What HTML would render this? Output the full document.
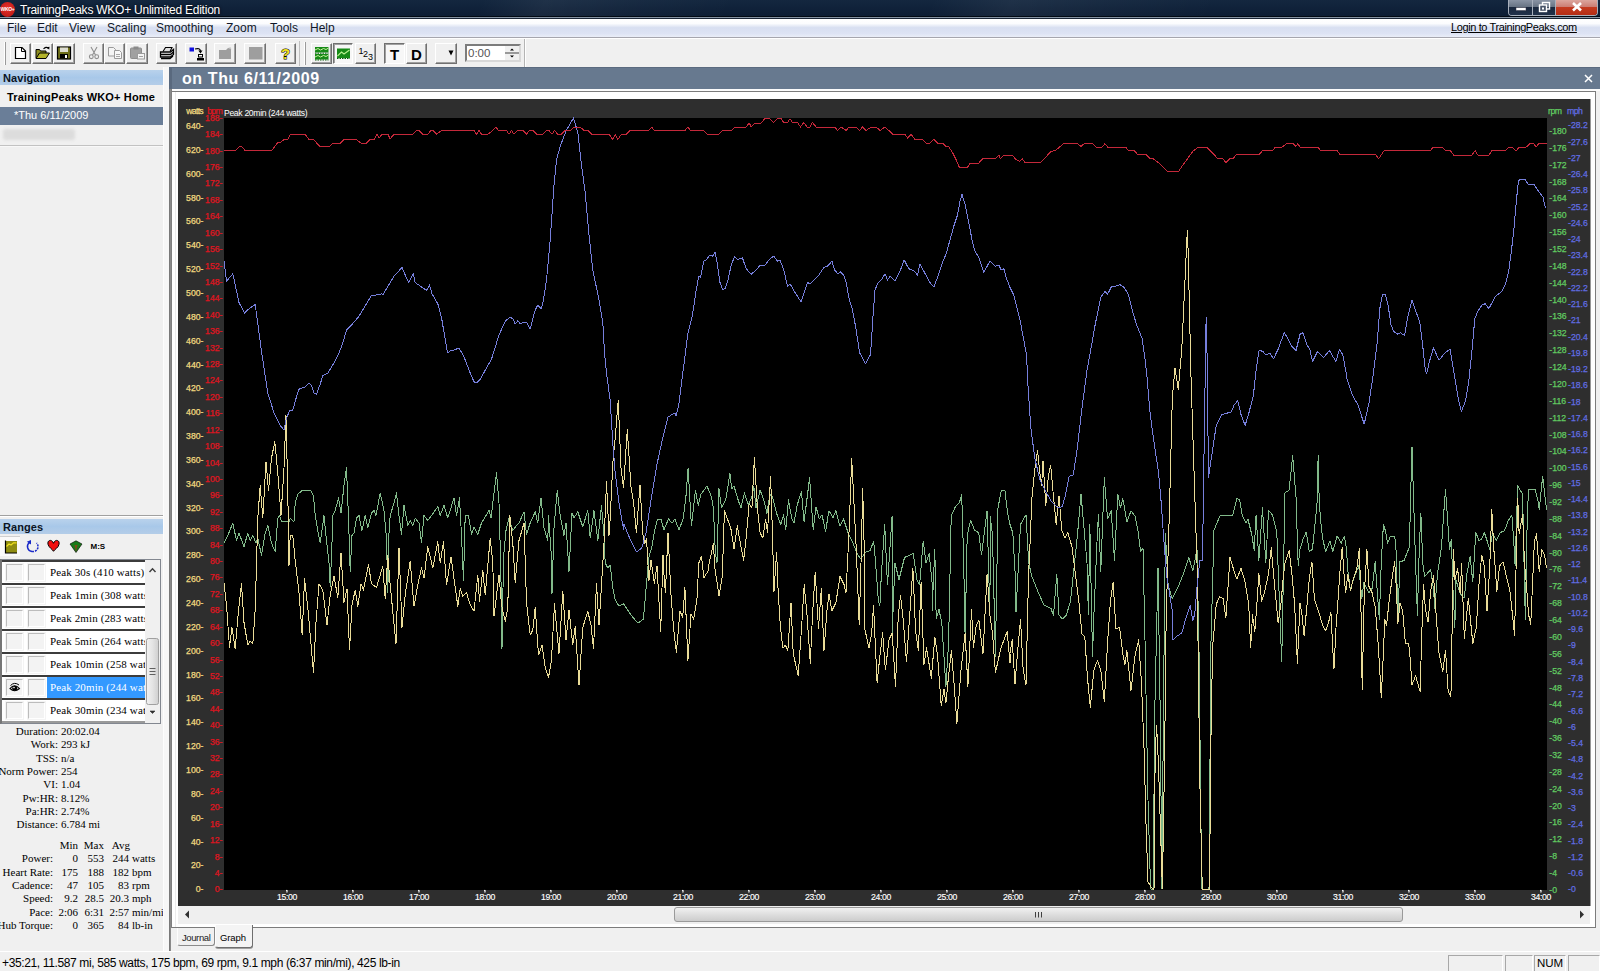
<!DOCTYPE html>
<html lang="en"><head><meta charset="utf-8"><title>TrainingPeaks WKO+ Unlimited Edition</title>
<style>
*{box-sizing:border-box;margin:0;padding:0}
html,body{width:1600px;height:971px;overflow:hidden;background:#f0f0f0;font-family:"Liberation Sans",Arial,sans-serif;font-size:12px;color:#000}
.abs{position:absolute}
#titlebar{position:absolute;left:0;top:0;width:1600px;height:19px;background:linear-gradient(#14273f 0,#10223a 8px,#0d1e34 16px,#020a14 16px,#020a14 17px,#8795a5 17px,#8795a5 18px,#1a2636 18px)}
#titlebar:after{content:"";position:absolute;left:0;top:0;width:1600px;height:16px;background:linear-gradient(115deg,rgba(255,255,255,0) 30%,rgba(255,255,255,.05) 34%,rgba(255,255,255,.02) 40%,rgba(255,255,255,0) 46%,rgba(255,255,255,0) 58%,rgba(255,255,255,.05) 63%,rgba(255,255,255,.02) 70%,rgba(255,255,255,0) 76%)}
#titlebar .ttl{position:absolute;left:20px;top:2.5px;color:#fff;font-size:12px;line-height:15px;white-space:nowrap;letter-spacing:-0.24px;text-shadow:0 0 3px #000}
#appicon{position:absolute;left:0;top:2px;width:15px;height:15px;border-radius:50%;background:radial-gradient(circle at 50% 40%,#e8302c,#b01410);color:#fff;font-size:5px;font-weight:bold;text-align:center;line-height:15px;letter-spacing:-0.3px}
#winbtns{position:absolute;left:1508px;top:0;width:90px;height:16px;border:1px solid #a8b0bc;border-top:none;border-radius:0 0 4px 4px;overflow:hidden}
#winbtns div{position:absolute;top:0;height:15px}
#menubar{position:absolute;left:0;top:19px;width:1600px;height:19px;background:linear-gradient(#ffffff 0,#fbfcfe 25%,#d8dff1 48%,#dde3f4 80%,#eaeef8 100%);border-bottom:1px solid #a6a6ae}
#menubar span{position:absolute;top:2px;font-size:12px;line-height:14px;color:#101828;white-space:nowrap}
#toolbar{position:absolute;left:0;top:38px;width:1600px;height:29px;background:#f0f0f0;border-top:1px solid #fff}
.tb{position:absolute;top:4px;height:21px;width:21px;background:#f0f0f0;border:1px solid;border-color:#fff #707070 #707070 #fff;box-shadow:inset -1px -1px 0 #a0a0a0}
.tb.down{border-color:#707070 #fff #fff #707070;box-shadow:inset 1px 1px 0 #a0a0a0;background:#f7f7f7}
.tb svg{position:absolute;left:0;top:0}
#mainhdr{position:absolute;left:169px;top:67px;width:1431px;height:22px;background:#67798f;border-left:3px solid #59697e;border-top:1px solid #5b6b80}
#mainhdr .t{position:absolute;left:10px;top:1px;color:#fff;font-weight:bold;font-size:16px;letter-spacing:.6px;line-height:19px;white-space:nowrap}
#left{position:absolute;left:0;top:67px;width:163px;height:887px;background:#f0f0f0}
.phdr{position:absolute;left:0;width:163px;height:15px;background:linear-gradient(#b9d2ec 0,#a8c8e9 50%,#b4cde8 100%);font-weight:bold;font-size:11px;letter-spacing:.08px;line-height:16px;padding-left:3px;color:#0a1424}
.serif{font-family:"Liberation Serif","Times New Roman",serif}
#chartwrap{position:absolute;left:0;top:0;width:1600px;height:971px;pointer-events:none}
#chart{position:absolute;left:0;top:0}
#statusbar{position:absolute;left:0;top:951px;width:1600px;height:20px;background:#f0f0f0;border-top:1px solid #fff}
#statusbar .st{position:absolute;left:2px;top:4px;font-size:12px;letter-spacing:-0.37px;line-height:15px;white-space:nowrap;color:#000}
.navb{font-weight:bold;font-size:11px;letter-spacing:.15px;line-height:15px;white-space:nowrap;top:23px!important;color:#000}
#rlist{position:absolute;left:0;top:492px;width:161px;height:165px;border:1px solid #828790;border-left:2px solid #767676;background:#fff;overflow:hidden}
#rlist .row{position:absolute;left:0;width:143px;height:23px;border-top:2px solid #3c3c3c;background:#fff;overflow:hidden}
#rlist .cb{position:absolute;top:2px;width:17px;height:17px;background:#f3f3f3;border:1px solid;border-color:#bcbcbc #fff #fff #bcbcbc;box-shadow:0 0 0 1px #f4f4f4}
#rlist .rt{position:absolute;left:48px;top:3px;font-size:11px;letter-spacing:.12px;line-height:15px;white-space:nowrap;color:#000}
#rlist .row.sel .rt{left:45px;width:98px;padding-left:3px;top:0;height:21px;line-height:21px;background:#3399ff;color:#fff}
#stats{position:absolute;left:0;top:657px;width:163px;height:110px;font-size:11px;line-height:14px;overflow:hidden}
#stats span,#tbl span{position:absolute;white-space:nowrap}
#stats .l{right:105px}
#stats .v{left:61px}
#tbl{position:absolute;left:0;top:771px;width:163px;height:100px;font-size:11px;line-height:14px;overflow:hidden}
#tbl .l{right:110px}
#tbl .c1{right:85px}
#tbl .c2{right:59px}
#tbl .c3{right:34px}
#tbl .c3h{right:33px}
#tbl .u{left:132px}
#statusbar .pane{position:absolute;top:3px;height:17px;border:1px solid;border-color:#a8a8a8 #fff #fff #a8a8a8;font-size:12px;line-height:15px;color:#000}

</style></head>
<body>
<div id="titlebar">
  <div id="appicon">WKO+</div>
  <div class="ttl">TrainingPeaks WKO+ Unlimited Edition</div>
  <div id="winbtns">
    <div style="left:0;width:24px;background:linear-gradient(#8a94a4 0,#687484 45%,#1a283e 50%,#22324a 100%);border-right:1px solid #a8b0bc"><svg width="24" height="15"><rect x="7" y="7.500" width="10" height="3" fill="#fff" stroke="#334" stroke-width=".5"/></svg></div>
    <div style="left:24px;width:23px;background:linear-gradient(#8a94a4 0,#687484 45%,#1a283e 50%,#22324a 100%);border-right:1px solid #a8b0bc"><svg width="23" height="15"><rect x="9.500" y="2.500" width="7" height="6.500" fill="none" stroke="#fff" stroke-width="1.400"/><rect x="6.500" y="5" width="7" height="6.500" fill="#4a566a" stroke="#fff" stroke-width="1.400"/><rect x="9" y="7.500" width="2" height="2" fill="#fff"/></svg></div>
    <div style="left:47px;width:42px;background:linear-gradient(#dca69e 0,#cc7e74 45%,#c43a20 50%,#b42e16 100%)"><svg width="42" height="15"><path d="M17 3 L25 10.500 M25 3 L17 10.500" stroke="#fff" stroke-width="2.600" fill="none"/></svg></div>
  </div>
</div>
<div id="menubar">
  <span style="left:7px">File</span><span style="left:37px">Edit</span><span style="left:69px">View</span><span style="left:107px">Scaling</span><span style="left:156px">Smoothing</span><span style="left:226px">Zoom</span><span style="left:270px">Tools</span><span style="left:310px">Help</span>
  <span style="left:1451px;top:1px;text-decoration:underline;color:#000;font-size:11px;letter-spacing:-0.38px">Login to TrainingPeaks.com</span>
</div>
<div id="toolbar">
  <div class="abs" style="left:4px;top:3px;width:2px;height:23px;border-left:1px solid #fff;border-right:1px solid #9a9a9a"></div>
  <div class="tb" style="left:10px;width:21px"><svg width="19" height="19" viewBox="0 0 19 19"><path d="M4.5 3.5 h6.500 l3.500 3.500 v7.500 h-10 z" fill="#fff" stroke="#000" stroke-width="1.2"/><path d="M10.500 3.500 v4 h4" fill="none" stroke="#000" stroke-width="1"/></svg></div>
  <div class="tb" style="left:32px;width:21px"><svg width="19" height="19" viewBox="0 0 19 19"><path d="M3 14 V5.5 h3.500 l1 1.500 h5.500 V9" fill="#8c8c20" stroke="#000" stroke-width="1"/><path d="M3 14.500 L6.500 9 H16.500 L13 14.500 Z" fill="#b4b42c" stroke="#000" stroke-width="1"/><path d="M10.500 5 q2.500 -3 5 -.5" fill="none" stroke="#000" stroke-width="1.100"/><path d="M13.800 3.200 l2.700 -.4 l-.3 2.900 z" fill="#000"/></svg></div>
  <div class="tb" style="left:53px;width:22px"><svg width="20" height="19" viewBox="0 0 20 19"><rect x="3.500" y="3" width="13" height="12" fill="#70701a" stroke="#000" stroke-width="1.200"/><rect x="6" y="3.500" width="8" height="4.500" fill="#dcdcd0"/><rect x="6" y="10" width="8" height="4.500" fill="#000"/><rect x="11" y="11" width="2" height="3" fill="#fff"/></svg></div>
  <div class="tb" style="left:83px;width:21px"><svg width="19" height="19" viewBox="0 0 19 19"><path d="M7 3 L11.500 11 M13 3 L8.500 11" stroke="#8e8e8e" stroke-width="1.100" fill="none"/><circle cx="7.300" cy="12.700" r="1.900" fill="none" stroke="#8e8e8e" stroke-width="1.100"/><circle cx="12.700" cy="12.700" r="1.900" fill="none" stroke="#8e8e8e" stroke-width="1.100"/></svg></div>
  <div class="tb" style="left:104px;width:21px"><svg width="19" height="19" viewBox="0 0 19 19"><path d="M3.500 3.500 h5 l2 2 v6.500 h-7 z" fill="#f4f4f4" stroke="#9a9a9a"/><path d="M9.500 6.500 h5 l2 2 v6 h-7 z" fill="#f8f8f8" stroke="#9a9a9a"/><path d="M11 10.500 h4 M11 12.500 h4" stroke="#a8a8a8"/></svg></div>
  <div class="tb" style="left:126px;width:22px"><svg width="20" height="19" viewBox="0 0 20 19"><rect x="3.500" y="4" width="11" height="10.500" rx="1" fill="#a0a0a0" stroke="#8e8e8e"/><rect x="6.500" y="2.500" width="5" height="3" fill="#8a8a8a"/><rect x="10.500" y="9.500" width="7" height="5.500" fill="#f4f4f4" stroke="#9a9a9a"/><path d="M12 12.500 h4" stroke="#a0a0a0"/></svg></div>
  <div class="tb" style="left:156px;width:21px"><svg width="19" height="19" viewBox="0 0 19 19"><path d="M6 7.500 L8.500 3.500 H15 L13 7.500" fill="#e0e0e0" stroke="#000" stroke-width="1.100"/><path d="M3.500 8 H13.500 L16.500 5.500 V10.500 L13.500 13 H3.500 Z" fill="#f0f0f0" stroke="#000" stroke-width="1.300"/><path d="M3.500 10.500 H13.500 L16.500 8" fill="none" stroke="#000" stroke-width="1.300"/><path d="M4 14.500 H13 L16 12" fill="none" stroke="#000" stroke-width="1.300"/></svg></div>
  <div class="tb" style="left:185px;width:22px"><svg width="20" height="19" viewBox="0 0 20 19"><rect x="3.500" y="3.500" width="4.500" height="4" fill="#1010e0"/><path d="M9 5 q5 -1.500 5.500 2" fill="none" stroke="#000" stroke-width="1.200"/><path d="M12.300 6.500 l2.200 3 l2 -3 z" fill="#000"/><rect x="12.500" y="10.500" width="4" height="2.500" fill="#fff" stroke="#000"/><rect x="11" y="14" width="7" height="2.500" fill="#000"/></svg></div>
  <div class="tb" style="left:214px;width:22px"><svg width="20" height="19" viewBox="0 0 20 19"><path d="M4 6 h7 l2 -2 h3 v11 h-12 z" fill="#9e9e9e"/><path d="M13 4 l2.500 -1 l1 2.500" fill="#c8c8c8"/></svg></div>
  <div class="tb" style="left:244px;width:22px"><svg width="20" height="19" viewBox="0 0 20 19"><rect x="4" y="3" width="13.500" height="12.500" fill="#9e9e9e"/></svg></div>
  <div class="tb" style="left:275px;width:21px"><svg width="19" height="19" viewBox="0 0 19 19"><text x="9.500" y="15" text-anchor="middle" font-family="Liberation Sans, Arial, sans-serif" font-weight="bold" font-size="15" fill="#f0e020" stroke="#000" stroke-width="1" paint-order="stroke">?</text></svg></div>
  <div class="abs" style="left:299px;top:2px;width:1px;height:25px;background:#c0c0c0"></div>
  <div class="abs" style="left:304px;top:3px;width:2px;height:23px;border-left:1px solid #fff;border-right:1px solid #9a9a9a"></div>
  <div class="tb" style="left:311px;width:21px"><svg width="19" height="19" viewBox="0 0 19 19"><rect x="3" y="3" width="13.500" height="5.500" fill="#178a17"/><rect x="3" y="10" width="13.500" height="5.500" fill="#178a17"/><path d="M3 6 l3 -1.500 l2.500 1.500 l3 -1.500 l2.500 1 l2.500 -1.500 M3 13 l3 -1.500 l2.500 1.500 l3 -1.500 l2.500 1 l2.500 -1.500" stroke="#c8f0a0" stroke-width="1" fill="none"/><path d="M3 9.200 h13.500 M3 16 h13.500" stroke="#0c5c0c" stroke-dasharray="1.500 1"/></svg></div>
  <div class="tb down" style="left:333px;width:20px"><svg width="18" height="19" viewBox="0 0 18 19"><rect x="3" y="4.500" width="13" height="9.500" fill="#178a17"/><path d="M3.500 12 l4 -4 l2.500 2 l5.500 -4" stroke="#b8f090" stroke-width="1.100" fill="none"/><path d="M3 14.500 h13" stroke="#0c5c0c" stroke-dasharray="1.500 1"/></svg></div>
  <div class="tb" style="left:355px;width:21px"><svg width="19" height="19" viewBox="0 0 19 19"><g font-family="Liberation Sans, Arial, sans-serif" font-size="9" fill="#000"><text x="2.500" y="10">1</text><text x="7" y="13">2</text><text x="12" y="16">3</text></g></svg></div>
  <div class="tb down" style="left:384px;width:21px"><svg width="19" height="19" viewBox="0 0 19 19"><text x="9.500" y="15.500" text-anchor="middle" font-family="Liberation Sans, Arial, sans-serif" font-weight="bold" font-size="15" fill="#000">T</text></svg></div>
  <div class="tb" style="left:406px;width:21px"><svg width="19" height="19" viewBox="0 0 19 19"><text x="9.500" y="15.500" text-anchor="middle" font-family="Liberation Sans, Arial, sans-serif" font-weight="bold" font-size="15" fill="#000">D</text></svg></div>
  <div class="tb" style="left:435px;width:22px"><svg width="20" height="19" viewBox="0 0 20 19"><path d="M12.500 6.500 h5 l-2.500 5 z" fill="#000"/></svg></div>
  <div class="abs" style="left:465px;top:5px;width:56px;height:18px;background:#fff;border:2px solid;border-color:#7c7c7c #d8d8d8 #d8d8d8 #7c7c7c"><span style="position:absolute;left:1px;top:0;font-size:11.500px;line-height:14px;color:#555">0:00</span><svg class="abs" style="left:38px;top:0" width="14" height="14"><rect x="0" y="0" width="14" height="14" fill="#f0f0f0"/><path d="M0 7 h14" stroke="#7c7c7c" stroke-width="1.500"/><path d="M5 4.500 l2 -2 l2 2 z M5 9.500 l2 2 l2 -2 z" fill="#000"/></svg></div>
  <div class="abs" style="left:524px;top:0;width:2px;height:28px;border-left:1px solid #b4b4b4;border-right:1px solid #fff"></div>
</div>
<div id="mainhdr"><div class="t">on Thu 6/11/2009</div>
  <svg class="abs" style="left:1411px;top:5px" width="12" height="12"><path d="M2 2 L9 9 M9 2 L2 9" stroke="#fff" stroke-width="1.5"/></svg>
</div>
<div id="left">
  <div class="phdr" style="top:3px">Navigation</div>
  <div class="abs navb" style="left:7px;top:90px">TrainingPeaks WKO+ Home</div>
  <div class="abs" style="left:0;top:40px;width:163px;height:18px;background:#6a7e98"></div>
  <div class="abs" style="left:14px;top:41px;color:#fff;font-size:11px;line-height:15px;white-space:nowrap">*Thu 6/11/2009</div>
  <div class="abs" style="left:3px;top:62px;width:72px;height:11px;background:#dcdcdc;border-radius:3px;filter:blur(1.5px)"></div>
  <div class="abs" style="left:0;top:78px;width:163px;height:2px;border-top:1px solid #c2c2c2;border-bottom:1px solid #f8f8f8"></div>
  <div class="abs" style="left:0;top:448px;width:163px;height:2px;border-top:1px solid #a0a0a0;border-bottom:1px solid #fff"></div>
  <div class="phdr" style="top:452px">Ranges</div>
  <div class="abs" style="left:0;top:469px;width:20px;height:20px;background:#fafafa;border-top:1px solid #d0d0d0"></div>
  <svg class="abs" style="left:0;top:469px" width="120" height="22" viewBox="0 0 120 22">
    <rect x="5" y="5" width="12" height="12" fill="#8f8d12"/>
    <path d="M5.500 4.500 V17 H17" stroke="#000" stroke-width="1.200" fill="none"/>
    <path d="M6.500 10.500 L9 8 L11 9 L13.500 6.800 L16.500 6.800" stroke="#f0e020" stroke-width="1.300" fill="none"/>
    <path d="M29.500 6.500 A5 5 0 0 0 32 15.500" stroke="#1828c8" stroke-width="1.500" fill="none"/>
    <path d="M32 15.500 A5 5 0 0 0 36.500 7" stroke="#1828c8" stroke-width="1.500" fill="none" stroke-dasharray="2 1"/>
    <path d="M26.800 5.800 L31 4 L31 8.500 Z" fill="#1828c8"/>
    <path d="M53.500 7.300 C52 2.800 47 3.800 48 8.300 C49 11.800 52.500 13.300 53.500 15.300 C54.500 13.300 58.500 11.800 59 8.300 C60 3.800 55 2.800 53.500 7.300 Z" fill="#f01010" stroke="#000" stroke-width="1"/>
    <path d="M70 8 L76 4.800 L82 8 L76 16.500 Z" fill="#1a7a1a" stroke="#000" stroke-width=".6"/>
    <path d="M74.500 9 L77.500 9 L76 16 Z" fill="#7a4a1a"/>
    <text x="90.500" y="12.800" font-family="Liberation Sans, Arial, sans-serif" font-size="8" font-weight="bold" fill="#000">M:S</text>
  </svg>
  <div id="rlist">
    <div class="row" style="top:0"><i class="cb" style="left:4px"></i><i class="cb" style="left:26px"></i><span class="rt serif">Peak 30s (410 watts)</span></div>
    <div class="row" style="top:23px"><i class="cb" style="left:4px"></i><i class="cb" style="left:26px"></i><span class="rt serif">Peak 1min (308 watts)</span></div>
    <div class="row" style="top:46px"><i class="cb" style="left:4px"></i><i class="cb" style="left:26px"></i><span class="rt serif">Peak 2min (283 watts)</span></div>
    <div class="row" style="top:69px"><i class="cb" style="left:4px"></i><i class="cb" style="left:26px"></i><span class="rt serif">Peak 5min (264 watts)</span></div>
    <div class="row" style="top:92px"><i class="cb" style="left:4px"></i><i class="cb" style="left:26px"></i><span class="rt serif">Peak 10min (258 watts)</span></div>
    <div class="row sel" style="top:115px"><i class="cb" style="left:4px"><svg width="15" height="15" viewBox="0 0 15 15" style="position:absolute;left:0;top:0"><path d="M3 8.500 Q7.500 3 12.500 8.500 Q7.500 13 3 8.500 Z" fill="#fff" stroke="#000" stroke-width="1.100"/><path d="M3.500 5.500 Q7.500 1.500 12 5" fill="none" stroke="#000" stroke-width="1"/><circle cx="7.700" cy="8.300" r="2.500" fill="#000"/><circle cx="7" cy="7.600" r=".8" fill="#fff"/></svg></i><i class="cb" style="left:26px"></i><span class="rt serif">Peak 20min (244 watts)</span></div>
    <div class="row" style="top:138px"><i class="cb" style="left:4px"></i><i class="cb" style="left:26px"></i><span class="rt serif">Peak 30min (234 watts)</span></div>
    <div class="abs" style="left:0;top:161px;width:143px;height:2px;background:#9a9a9a"></div>
    <div class="abs" style="left:143px;top:0;width:15px;height:163px;background:#f0f0f0"></div>
    <svg class="abs" style="left:143px;top:0" width="15" height="163"><path d="M4.5 12 L7.5 8.8 L10.5 12" stroke="#404040" stroke-width="1.5" fill="none"/><path d="M5 151 L7.5 153.5 L10 151 Z" fill="#303030" stroke="#303030" stroke-width=".6"/><defs><linearGradient id="vth" x1="0" y1="0" x2="1" y2="0"><stop offset="0" stop-color="#f2f2f2"/><stop offset=".5" stop-color="#e4e4e4"/><stop offset="1" stop-color="#cfcfcf"/></linearGradient></defs><rect x="1.5" y="78.500" width="12" height="66" rx="2" fill="url(#vth)" stroke="#a0a0a0"/><path d="M4.500 108.5h6M4.500 111.5h6M4.500 114.5h6" stroke="#606060"/></svg>
  </div>
  <div id="stats" class="serif">
    <span class="l" style="top:0">Duration:</span><span class="v" style="top:0">20:02.04</span>
    <span class="l" style="top:13.3px">Work:</span><span class="v" style="top:13.3px">293 kJ</span>
    <span class="l" style="top:26.6px">TSS:</span><span class="v" style="top:26.6px">n/a</span>
    <span class="l" style="top:39.9px">Norm Power:</span><span class="v" style="top:39.9px">254</span>
    <span class="l" style="top:53.2px">VI:</span><span class="v" style="top:53.2px">1.04</span>
    <span class="l" style="top:66.5px">Pw:HR:</span><span class="v" style="top:66.5px">8.12%</span>
    <span class="l" style="top:79.8px">Pa:HR:</span><span class="v" style="top:79.8px">2.74%</span>
    <span class="l" style="top:93.1px">Distance:</span><span class="v" style="top:93.1px">6.784 mi</span>
  </div>
  <div id="tbl" class="serif">
    <span class="c1" style="top:0">Min</span><span class="c2" style="top:0">Max</span><span class="c3h" style="top:0">Avg</span>
    <span class="l" style="top:13.3px">Power:</span><span class="c1" style="top:13.3px">0</span><span class="c2" style="top:13.3px">553</span><span class="c3" style="top:13.3px">244</span><span class="u" style="top:13.3px">watts</span>
    <span class="l" style="top:26.6px">Heart Rate:</span><span class="c1" style="top:26.6px">175</span><span class="c2" style="top:26.6px">188</span><span class="c3" style="top:26.6px">182</span><span class="u" style="top:26.6px">bpm</span>
    <span class="l" style="top:39.9px">Cadence:</span><span class="c1" style="top:39.9px">47</span><span class="c2" style="top:39.9px">105</span><span class="c3" style="top:39.9px">83</span><span class="u" style="top:39.9px">rpm</span>
    <span class="l" style="top:53.2px">Speed:</span><span class="c1" style="top:53.2px">9.2</span><span class="c2" style="top:53.2px">28.5</span><span class="c3" style="top:53.2px">20.3</span><span class="u" style="top:53.2px">mph</span>
    <span class="l" style="top:66.5px">Pace:</span><span class="c1" style="top:66.5px">2:06</span><span class="c2" style="top:66.5px">6:31</span><span class="c3" style="top:66.5px">2:57</span><span class="u" style="top:66.5px">min/mi</span>
    <span class="l" style="top:79.8px">Hub Torque:</span><span class="c1" style="top:79.8px">0</span><span class="c2" style="top:79.8px">365</span><span class="c3" style="top:79.8px">84</span><span class="u" style="top:79.8px">lb-in</span>
  </div>
</div>
<div class="abs" style="left:163px;top:67px;width:6px;height:884px;background:#f7f7f7;border-left:1px solid #fdfdfd"></div>
<!-- chart pane frame -->
<div class="abs" style="left:169px;top:89px;width:3px;height:862px;background:linear-gradient(90deg,#727272,#8a8a8a,#7a7a7a)"></div>
<div class="abs" style="left:172px;top:89px;width:1428px;height:2px;background:#fbfbfb"></div>
<div class="abs" style="left:172px;top:91px;width:1424px;height:837px;border:1px solid #7c7c7c;border-left:none;background:linear-gradient(90deg,#fff 0,#fff 3px,#ececec 3px,#ececec 4.5px,#fff 4.5px)"></div>
<div class="abs" style="left:1596px;top:91px;width:4px;height:860px;background:#f0f0f0"></div>
<div id="chartwrap">
<svg id="chart" width="1600" height="971" viewBox="0 0 1600 971">
<rect x="178" y="99" width="1412.5" height="807" fill="#2e2e2e"/>
<rect x="224" y="118" width="1323" height="772" fill="#000"/>
<polyline points="224.0,543.0 227.8,535.5 232.8,523.0 236.5,540.5 239.0,533.0 244.0,546.8 247.8,533.0 250.2,540.5 252.8,535.5 256.0,543.0 257.8,538.0 261.5,555.5 265.2,533.0 267.8,525.5 271.5,543.0 275.2,551.8 277.8,518.0 279.5,515.5 281.5,521.8 289.0,521.8 290.2,518.0 294.0,521.8 295.2,503.0 297.8,494.2 302.8,490.0 310.2,490.0 313.5,495.5 315.2,515.5 317.8,530.5 320.2,543.0 324.0,515.5 326.5,540.5 329.0,563.0 330.2,586.8 332.0,543.0 332.8,515.5 335.2,510.5 338.5,498.0 341.0,513.0 344.0,485.5 346.5,468.0 348.5,518.0 350.2,571.8 352.0,535.5 354.0,533.0 356.5,518.0 359.0,515.5 362.0,530.5 365.2,515.5 367.8,528.0 371.5,513.0 374.0,510.5 376.0,515.5 380.2,493.0 384.0,510.5 386.5,538.0 387.8,593.0 389.0,533.0 390.2,515.5 394.0,503.0 396.5,493.0 399.0,515.5 401.5,534.2 404.0,505.5 407.8,525.5 410.2,520.5 412.8,525.5 415.2,518.0 419.0,523.0 421.5,543.0 424.0,515.5 427.8,520.5 431.5,515.5 437.8,506.8 440.2,515.5 444.0,505.5 447.8,518.0 454.0,498.0 456.5,515.5 459.5,498.0 461.5,535.5 463.5,581.0 465.2,515.5 468.5,515.5 471.5,534.2 474.0,526.8 477.8,534.2 481.5,523.0 489.0,510.5 491.0,518.0 494.0,493.0 496.5,473.0 499.0,503.0 500.8,568.0 502.0,648.8 503.5,558.0 506.0,530.5 509.0,518.0 512.8,530.5 516.5,525.5 519.0,523.0 524.0,511.8 526.5,534.2 530.2,523.0 535.2,511.8 537.8,523.0 541.0,498.0 544.0,528.0 547.8,540.5 548.5,515.5 551.5,558.0 552.0,593.8 554.0,528.0 557.2,490.5 560.2,515.5 564.0,535.5 566.0,523.0 569.0,571.8 572.0,513.0 574.0,518.0 577.8,511.8 582.8,526.8 587.8,510.5 590.2,538.0 594.0,510.5 597.8,540.5 601.5,505.5 604.0,535.5 605.2,563.0 607.8,568.0 610.2,565.0 612.8,587.5 615.2,600.0 619.0,606.2 623.5,603.8 625.5,606.8 631.0,615.0 637.9,623.2 643.4,619.1 648.8,557.5 652.0,546.5 654.2,532.8 657.5,519.0 661.1,519.0 663.9,530.0 668.5,519.0 672.1,523.1 674.9,519.0 679.0,530.0 683.1,519.0 685.9,497.0 688.1,468.1 691.4,525.9 695.5,490.1 698.2,505.2 701.0,494.2 707.0,486.0 711.5,497.0 713.4,508.0 715.3,552.0 717.0,563.0 718.9,488.8 721.6,508.0 725.8,499.8 729.9,473.6 731.8,488.8 734.0,486.0 738.1,499.8 740.9,508.0 744.5,492.9 748.3,505.2 751.9,497.0 753.8,486.0 756.0,508.0 760.1,490.1 764.2,501.1 767.0,513.5 769.8,494.2 772.5,497.0 776.6,513.5 780.8,524.5 783.5,514.9 785.7,530.0 788.5,499.8 791.8,519.0 794.0,523.1 797.2,505.2 801.4,491.5 804.1,521.8 809.6,477.8 813.2,530.0 816.0,506.6 819.2,519.0 822.0,514.9 825.6,531.4 828.9,510.8 833.0,517.6 835.8,510.8 839.9,525.9 843.5,519.0 848.1,532.8 852.2,541.0 856.4,552.0 860.5,558.9 866.0,552.0 870.1,550.6 873.7,541.0 875.6,563.0 878.4,601.5 879.9,605.4 881.1,579.5 884.7,524.5 887.5,585.0 892.1,516.2 892.2,634.2 894.9,563.0 899.0,579.5 904.5,557.5 913.3,553.4 916.9,579.5 919.6,585.0 923.2,541.0 926.0,563.0 929.2,553.4 932.0,582.2 932.1,610.9 934.8,549.2 936.2,619.1 939.0,609.5 941.8,623.2 945.9,686.5 948.6,642.5 951.2,516.2 955.4,506.6 959.5,502.5 961.7,494.2 963.6,557.5 965.1,637.0 967.2,535.5 970.5,520.4 974.6,530.0 978.8,532.8 981.5,554.8 987.0,510.8 989.9,615.0 990.3,516.2 992.5,535.5 995.4,656.2 998.0,508.0 1001.3,490.1 1004.9,490.1 1007.6,513.5 1010.0,524.5 1012.8,532.8 1015.5,579.5 1016.0,612.2 1020.5,524.5 1026.0,514.9 1028.7,563.0 1032.0,576.8 1037.5,590.5 1043.0,602.9 1044.4,605.4 1051.2,608.4 1051.2,609.5 1053.5,615.0 1056.8,574.0 1059.0,615.0 1062.2,619.1 1066.4,615.0 1070.5,601.2 1077.4,535.5 1081.0,494.2 1084.2,530.0 1087.0,563.0 1088.4,615.0 1089.8,524.5 1092.5,656.2 1093.9,615.0 1097.5,530.0 1098.5,514.9 1100.8,571.2 1104.3,477.8 1107.6,519.0 1111.2,510.8 1114.5,560.2 1117.8,494.2 1120.5,508.0 1122.8,498.4 1126.9,521.8 1131.0,510.8 1135.1,516.2 1137.9,530.0 1140.6,552.0 1143.0,548.0 1145.0,640.0 1148.0,800.0 1150.6,889.0 1153.0,889.0 1155.0,700.0 1158.0,568.0 1160.0,700.0 1162.0,889.0 1163.5,700.0 1165.4,533.0 1168.1,585.0 1172.3,598.8 1177.8,587.8 1183.3,574.0 1188.8,557.5 1192.9,571.0 1197.0,549.0 1199.0,650.0 1201.7,889.0 1209.0,889.0 1210.9,645.0 1214.0,530.0 1220.4,515.0 1232.8,515.0 1236.9,498.4 1239.6,499.8 1242.4,516.2 1246.0,523.1 1247.9,519.0 1252.0,535.5 1254.2,550.6 1256.1,514.9 1258.9,560.2 1262.5,508.0 1265.8,563.0 1268.5,510.8 1272.6,514.9 1276.8,532.8 1281.7,661.8 1285.0,492.9 1289.1,490.1 1292.7,455.8 1296.0,497.0 1298.2,565.8 1300.0,549.4 1303.1,539.1 1306.2,531.9 1309.3,551.5 1312.4,549.4 1315.4,520.6 1317.3,500.0 1318.1,455.7 1319.2,500.0 1320.6,520.6 1322.7,539.1 1325.7,551.5 1329.9,541.2 1332.9,551.5 1337.1,536.0 1341.2,543.2 1344.3,536.0 1346.3,547.4 1347.8,570.0 1350.5,590.6 1352.5,582.4 1354.6,576.2 1358.7,565.9 1361.8,598.8 1363.8,582.4 1365.9,586.5 1369.0,592.7 1372.1,588.5 1375.2,561.8 1377.2,590.6 1379.3,619.4 1381.3,561.8 1383.4,524.7 1385.5,530.9 1387.5,543.2 1390.6,536.0 1394.7,536.0 1396.4,553.5 1397.8,623.6 1399.9,561.8 1400.0,561.8 1404.0,560.5 1409.4,547.1 1410.7,493.5 1412.0,446.7 1413.4,493.5 1415.5,560.5 1417.4,615.4 1419.3,547.1 1420.9,513.6 1422.8,563.2 1424.6,576.5 1428.1,572.5 1430.8,569.9 1433.5,589.9 1434.8,608.7 1437.5,573.9 1441.5,547.1 1444.2,506.9 1445.5,489.5 1447.7,520.3 1449.5,549.8 1451.4,539.1 1453.0,589.9 1454.9,627.4 1455.7,579.2 1460.2,593.9 1464.3,598.0 1466.9,573.9 1470.1,556.5 1472.8,581.9 1475.8,532.4 1479.0,540.4 1481.7,539.1 1484.3,532.4 1487.0,540.4 1489.7,549.8 1492.4,533.7 1496.4,540.4 1500.4,532.4 1504.4,531.0 1508.4,520.3 1511.9,515.0 1513.8,541.7 1515.1,565.8 1516.5,520.3 1517.8,485.5 1520.5,490.9 1522.6,493.5 1523.7,547.1 1525.3,619.4 1527.2,520.3 1528.5,489.5 1535.2,489.5 1537.9,500.2 1539.2,509.6 1542.7,476.1 1544.6,493.5 1546.5,509.6" fill="none" stroke="#82ba8a" stroke-width="1" stroke-linejoin="round" shape-rendering="crispEdges"/>
<polyline points="224.0,582.5 226.5,605.0 229.5,647.5 232.0,627.5 235.2,648.8 238.5,610.0 241.5,583.8 244.0,622.5 247.8,645.0 250.2,641.2 252.8,643.8 255.2,610.0 257.8,518.0 260.2,485.5 262.8,518.0 266.0,461.8 268.5,490.5 271.5,458.0 274.8,441.8 277.8,473.0 281.0,515.5 284.0,468.0 286.0,415.5 287.8,493.0 289.0,565.5 290.2,535.5 292.8,535.5 295.2,560.5 299.0,592.5 302.2,635.0 304.5,578.8 307.8,607.5 310.2,635.0 313.5,672.5 316.0,622.5 319.0,583.8 322.8,590.0 327.0,625.0 330.2,595.0 334.0,576.2 337.8,597.5 341.0,553.0 344.0,602.5 347.0,588.8 349.5,650.0 352.0,605.0 355.2,590.0 357.8,606.2 361.0,583.8 363.5,590.0 368.5,565.0 371.5,583.8 376.5,587.5 382.8,566.2 385.2,598.8 387.8,555.5 390.2,585.0 396.0,643.8 399.0,548.0 402.0,627.5 405.2,595.0 410.2,561.2 414.0,606.2 417.8,585.0 421.5,568.0 424.0,578.0 427.8,546.8 432.8,568.0 437.8,541.8 440.2,563.0 443.5,541.8 446.5,585.0 451.0,556.8 453.5,575.0 457.8,606.2 460.2,588.8 462.8,596.2 466.5,592.5 470.2,605.0 474.0,611.2 477.8,575.0 479.5,601.2 482.8,570.0 485.2,595.0 490.2,538.0 492.8,563.0 494.0,616.2 499.0,575.0 501.5,605.0 505.2,621.2 507.8,607.5 509.8,515.5 512.8,543.0 515.2,582.5 519.0,540.5 524.0,523.0 526.5,602.5 530.2,635.0 532.8,630.0 535.2,607.5 538.5,655.0 542.0,645.0 545.2,667.5 548.5,677.5 551.5,660.0 554.5,603.8 559.0,653.8 562.8,591.2 566.0,640.0 569.0,610.0 572.8,645.0 575.2,626.2 579.0,685.0 582.8,627.5 587.8,611.2 591.0,625.0 593.5,648.8 596.5,583.8 599.0,625.0 601.5,585.0 604.0,543.0 606.5,481.8 609.0,535.5 610.2,518.0 612.8,463.0 615.2,438.0 618.2,400.5 621.0,468.0 623.5,488.0 627.3,429.6 630.9,486.0 633.6,502.5 636.4,532.8 640.0,484.6 642.7,532.8 644.6,543.8 646.5,538.2 648.9,580.6 651.0,560.2 654.4,583.4 657.0,565.8 660.7,631.5 663.0,554.8 663.5,568.2 665.4,593.0 668.0,532.8 670.9,593.0 673.6,628.8 676.4,652.1 680.0,610.9 682.7,617.8 684.9,587.5 687.9,660.4 691.0,613.6 693.7,619.1 697.0,598.5 698.8,563.0 701.5,556.1 703.9,577.9 708.0,571.0 709.2,563.0 713.4,543.8 714.9,568.2 719.0,595.8 722.3,576.5 724.4,510.8 728.5,521.8 731.2,530.0 734.0,549.2 737.3,525.9 740.9,546.5 743.6,560.2 746.4,535.5 749.1,503.9 751.9,508.0 754.4,457.1 757.4,508.0 760.1,532.8 762.9,538.2 765.6,519.0 767.5,532.8 770.6,476.4 772.5,535.5 774.0,591.6 776.6,552.0 778.1,590.2 780.3,626.0 782.8,648.0 785.5,645.2 787.8,650.8 791.0,602.6 793.2,653.5 798.2,675.5 801.5,628.8 804.2,584.8 807.0,615.0 810.3,663.1 812.5,615.0 815.2,572.4 818.5,628.8 821.3,588.9 824.0,650.8 826.8,612.2 829.0,594.4 831.8,610.9 835.9,602.6 840.0,576.5 844.1,584.8 846.0,593.0 849.0,532.8 851.7,458.5 854.5,513.5 856.4,552.0 859.2,624.6 861.0,563.0 862.7,488.8 864.6,563.0 864.8,628.8 868.9,648.0 871.6,634.2 873.5,605.4 877.1,682.4 879.9,656.2 882.6,632.9 885.4,670.0 889.0,639.8 892.2,632.9 895.5,686.5 898.3,615.0 900.5,595.8 903.2,619.1 906.5,661.8 910.1,609.5 912.9,568.2 915.6,631.5 918.4,650.8 921.1,582.0 923.9,664.5 926.6,648.0 931.3,678.2 934.9,637.0 937.6,656.2 941.2,705.8 944.0,689.2 945.9,703.0 948.6,675.5 951.4,650.8 954.1,683.8 956.9,723.6 961.0,670.0 965.1,632.9 967.9,686.5 971.5,609.5 973.4,648.0 976.1,626.0 978.9,620.5 983.0,653.5 987.1,573.8 989.9,615.0 992.6,634.2 995.4,672.8 1000.9,648.0 1007.2,631.5 1010.0,663.1 1010.0,653.5 1012.2,639.8 1015.0,683.8 1017.7,650.8 1020.5,619.1 1023.2,670.0 1026.0,685.1 1028.7,568.2 1029.2,563.0 1032.0,497.0 1034.8,469.5 1037.5,450.2 1039.7,472.2 1041.6,486.0 1043.0,461.2 1045.8,505.2 1048.5,475.0 1050.7,465.4 1053.5,497.0 1056.2,524.5 1059.0,495.6 1061.7,530.0 1065.0,538.2 1067.8,532.8 1071.9,546.5 1076.0,579.2 1078.8,601.2 1082.0,634.2 1084.8,637.0 1087.5,678.2 1090.3,707.1 1093.9,670.0 1097.5,660.4 1100.8,670.0 1104.3,701.6 1107.6,642.5 1110.4,601.2 1113.1,582.0 1115.9,628.8 1119.5,627.4 1122.8,653.5 1125.0,664.5 1126.9,650.8 1131.0,690.6 1135.1,654.9 1138.7,639.8 1141.5,683.8 1144.2,752.5 1146.1,827.0 1148.0,882.0 1152.5,889.0 1154.0,889.0 1155.2,752.5 1156.6,725.0 1158.5,766.0 1162.4,889.0 1164.7,750.0 1166.2,615.0 1169.5,508.0 1172.3,398.0 1175.0,367.8 1178.3,389.8 1181.9,347.0 1184.6,288.8 1186.6,244.8 1187.4,230.0 1188.2,253.0 1189.3,302.5 1191.0,377.0 1194.3,480.5 1197.0,563.0 1198.4,670.0 1199.8,780.0 1202.3,889.0 1209.5,889.0 1210.8,750.0 1211.5,697.5 1213.0,642.5 1216.3,604.0 1219.6,597.0 1223.1,598.5 1225.9,617.8 1230.0,557.5 1234.1,571.0 1236.9,579.2 1241.0,568.2 1245.1,582.0 1248.7,604.0 1250.6,648.0 1252.5,615.0 1254.8,631.5 1256.7,606.8 1258.9,573.8 1261.6,601.2 1264.4,593.0 1268.5,573.8 1271.2,547.9 1278.1,623.2 1280.9,604.0 1283.6,573.8 1285.0,563.0 1289.1,550.6 1291.9,573.8 1294.6,604.0 1297.4,663.1 1300.0,603.0 1302.1,615.3 1304.1,635.9 1307.2,603.0 1309.3,578.2 1311.9,561.8 1314.4,598.8 1318.5,611.2 1322.7,625.6 1325.7,630.8 1328.8,621.5 1330.9,612.2 1332.5,644.1 1334.0,668.9 1336.0,627.7 1338.1,598.8 1340.2,568.0 1342.2,547.4 1344.3,578.2 1345.7,592.7 1347.8,574.1 1350.5,590.6 1353.5,578.2 1356.6,570.0 1359.3,548.4 1360.7,590.6 1362.2,689.4 1364.2,596.8 1366.9,549.4 1369.0,586.5 1372.1,592.7 1375.2,607.1 1378.2,644.1 1381.3,697.7 1383.4,652.4 1384.8,619.4 1386.5,625.6 1389.6,596.8 1392.7,574.1 1394.7,561.8 1396.4,588.5 1397.8,623.6 1399.9,605.0 1400.0,603.3 1402.7,611.4 1405.4,643.5 1408.0,643.5 1409.4,648.8 1412.0,685.0 1415.5,675.6 1420.1,691.7 1422.0,627.4 1423.6,584.6 1425.4,608.7 1428.1,622.1 1430.8,589.9 1433.5,575.2 1436.1,614.0 1438.8,651.5 1442.8,671.6 1445.5,650.2 1448.2,691.7 1450.9,697.0 1453.5,549.8 1454.9,579.2 1457.6,568.5 1460.2,593.9 1461.6,563.2 1464.3,638.1 1468.3,598.0 1472.8,643.5 1476.3,627.4 1479.0,584.6 1481.7,555.1 1484.3,565.8 1487.0,611.4 1489.7,568.5 1491.8,509.6 1493.7,547.1 1496.9,591.3 1499.6,565.8 1503.1,561.8 1505.8,573.9 1509.8,589.9 1512.4,614.0 1514.6,635.4 1516.5,547.1 1517.8,498.9 1519.1,533.7 1522.6,515.0 1524.5,563.2 1526.4,584.6 1528.5,614.0 1530.7,624.7 1532.5,584.6 1534.4,541.7 1536.5,533.7 1539.2,571.2 1541.9,549.8 1544.6,555.1 1546.5,568.5" fill="none" stroke="#eadc98" stroke-width="1" stroke-linejoin="round" shape-rendering="crispEdges"/>
<polyline points="224.0,261.2 226.5,281.2 232.8,273.8 239.0,302.5 244.5,313.0 249.0,308.8 255.2,304.5 261.5,351.2 264.0,368.0 267.8,393.0 274.0,413.0 280.2,425.5 284.0,430.0 286.5,418.0 289.5,411.0 292.8,410.0 296.5,396.8 299.0,389.2 305.2,386.8 309.0,383.0 311.5,385.5 314.0,393.0 316.5,394.2 320.2,384.2 322.8,375.5 327.8,373.0 334.0,363.0 339.0,353.0 342.8,343.0 346.5,330.0 351.5,325.0 359.0,316.2 371.5,295.5 376.5,295.0 381.5,293.8 382.8,295.0 394.0,276.2 402.0,267.5 408.5,282.5 413.2,273.8 415.2,282.5 426.5,290.5 429.5,285.0 432.0,293.8 437.8,303.8 441.5,317.5 447.2,351.2 447.2,353.0 450.2,351.0 454.0,350.0 459.0,348.0 464.0,356.8 470.2,373.0 474.0,381.8 476.5,383.0 480.2,379.2 486.5,368.0 491.5,359.2 496.5,343.0 499.0,335.0 505.2,321.2 510.2,317.0 512.8,318.8 515.2,323.8 517.8,320.8 520.2,323.8 524.0,322.0 526.5,322.5 530.2,328.8 535.2,310.0 537.8,305.0 541.0,308.8 542.8,303.8 546.5,280.0 550.2,240.0 554.0,185.0 556.5,160.0 560.2,146.2 566.5,130.0 573.5,118.0 577.8,132.5 581.5,165.0 585.2,192.5 589.0,235.0 592.8,270.0 599.0,300.0 602.8,322.5 604.5,352.8 606.5,373.0 610.2,400.5 612.8,443.0 615.2,473.0 619.0,503.0 623.5,529.2 624.0,524.5 630.9,541.0 636.4,552.0 641.9,547.9 646.0,532.8 651.5,497.0 657.0,464.0 662.5,439.2 668.0,417.2 672.1,414.5 674.9,413.1 676.2,415.9 679.0,403.5 683.1,370.5 686.7,343.0 687.5,335.0 692.5,315.0 696.2,290.0 698.8,276.2 700.5,277.5 703.8,261.2 706.2,260.0 710.0,255.0 713.0,256.2 715.0,251.8 717.5,265.0 720.0,282.5 722.5,289.5 725.0,288.8 728.0,280.0 731.2,265.0 734.5,257.0 737.5,259.5 742.5,258.0 746.2,268.8 751.2,274.2 756.2,270.0 760.0,265.5 765.0,265.0 770.0,258.8 773.8,256.2 777.5,261.2 780.0,260.0 783.8,270.0 787.5,286.2 790.0,283.8 795.0,292.5 801.2,302.0 805.0,290.0 807.5,282.5 810.0,283.8 813.8,280.0 818.8,275.0 823.8,267.5 827.5,266.2 832.0,261.2 834.5,270.0 838.0,273.8 840.5,272.0 843.8,275.0 846.2,282.5 848.8,297.5 852.5,310.0 856.2,330.0 859.5,352.8 860.5,354.0 865.5,363.6 870.1,355.4 871.5,343.0 872.5,322.5 875.0,290.0 877.5,283.8 881.2,280.0 885.0,273.8 887.5,280.0 890.0,276.2 895.0,281.2 900.0,271.2 904.2,260.0 908.8,268.8 913.8,270.5 917.5,275.0 920.0,263.8 923.8,271.2 930.0,282.5 933.8,287.0 937.5,277.5 942.5,262.5 946.2,253.8 950.0,240.0 953.8,226.2 957.5,215.0 960.0,201.2 962.0,194.5 965.0,203.8 968.8,222.5 972.5,242.5 975.0,251.2 978.8,257.5 983.8,272.5 990.0,260.8 995.0,266.2 998.8,265.0 1001.2,270.0 1003.8,268.8 1006.2,277.5 1010.0,287.5 1013.8,295.0 1017.5,310.0 1019.5,317.5 1022.4,332.8 1026.0,352.0 1027.9,377.0 1027.9,384.2 1030.6,425.5 1034.8,458.5 1040.2,480.5 1045.8,491.5 1051.2,501.1 1058.1,508.0 1062.2,506.6 1065.0,497.0 1069.1,476.4 1073.2,475.0 1077.4,447.5 1081.5,411.8 1087.0,370.5 1092.0,343.0 1095.2,324.5 1100.8,297.0 1104.9,291.5 1107.6,294.2 1111.8,286.0 1115.9,286.0 1120.0,284.6 1124.1,287.4 1128.2,294.2 1132.4,310.8 1136.5,324.5 1142.0,338.2 1144.8,357.5 1147.0,377.0 1150.2,414.5 1154.4,444.8 1158.5,472.2 1161.2,502.5 1163.5,535.5 1166.8,576.8 1172.2,610.0 1172.8,639.8 1177.8,635.6 1181.9,632.9 1186.0,617.8 1190.1,605.4 1192.9,620.5 1194.8,613.6 1197.0,587.5 1199.8,560.0 1202.5,560.0 1204.5,420.0 1206.1,317.6 1206.9,343.0 1208.5,477.8 1212.1,453.0 1216.2,425.5 1221.8,414.5 1227.2,413.1 1231.4,411.8 1234.1,404.9 1237.7,400.8 1241.0,414.5 1245.1,425.5 1249.2,411.8 1253.4,395.2 1256.1,370.5 1258.9,351.2 1260.2,350.6 1263.0,351.5 1265.8,354.8 1269.9,353.4 1273.5,358.9 1278.1,349.2 1284.2,332.8 1287.8,338.2 1291.9,346.5 1296.0,350.6 1300.1,334.1 1302.9,332.8 1307.0,345.1 1309.8,349.2 1312.5,361.6 1317.5,351.5 1323.5,357.5 1329.5,350.6 1335.9,361.6 1339.5,349.2 1342.8,354.8 1346.9,377.0 1346.9,378.8 1352.4,395.2 1357.9,404.9 1364.2,424.1 1368.9,403.5 1373.0,376.0 1377.1,343.0 1377.1,343.8 1379.9,308.0 1382.6,294.2 1385.4,294.2 1388.1,305.2 1390.9,324.5 1393.6,331.4 1397.8,334.1 1400.5,332.8 1404.6,335.5 1407.4,319.0 1412.0,299.8 1415.6,310.8 1419.8,321.8 1422.5,343.8 1425.2,368.5 1426.6,374.0 1429.4,361.6 1433.5,347.9 1439.0,360.2 1444.5,353.4 1450.0,349.2 1454.2,374.2 1458.3,398.9 1461.4,411.3 1465.5,401.0 1468.6,382.4 1471.7,353.6 1474.8,318.6 1477.8,311.4 1482.0,305.2 1485.1,303.7 1488.8,308.7 1492.3,302.1 1495.4,296.3 1501.5,291.8 1505.7,283.6 1508.7,271.2 1511.4,250.6 1513.9,230.0 1514.6,220.4 1516.6,198.3 1518.4,181.8 1519.7,179.0 1524.9,179.0 1528.0,184.3 1533.9,184.3 1537.3,189.4 1540.8,194.2 1542.9,197.0 1545.6,208.0" fill="none" stroke="#767fdc" stroke-width="1" stroke-linejoin="round" shape-rendering="crispEdges"/>
<polyline points="224.0,150.8 235.2,150.8 239.5,146.8 242.0,146.8 245.2,150.8 271.5,150.8 277.8,142.5 280.2,142.5 284.0,139.5 287.8,139.5 290.2,134.2 305.2,134.2 309.0,139.5 313.5,139.5 320.2,146.8 329.0,146.8 332.8,143.2 340.2,143.2 344.0,139.5 356.5,139.5 361.0,143.2 366.5,143.2 370.2,139.5 374.0,139.5 377.0,134.2 379.0,138.0 382.0,134.2 387.8,134.2 390.2,138.8 394.0,134.2 412.8,134.2 416.5,130.5 419.0,130.5 422.8,134.2 427.8,134.2 431.0,130.5 432.8,130.5 436.5,134.2 441.5,130.5 474.0,130.5 476.5,134.2 479.0,130.5 481.5,134.2 487.8,134.2 492.8,130.5 496.0,127.0 498.5,130.5 506.5,130.5 509.0,134.2 511.5,130.5 514.0,134.2 517.8,130.5 522.8,130.5 526.5,134.2 529.5,130.5 532.8,130.5 536.5,134.2 542.8,134.2 546.5,130.5 549.0,130.5 552.0,134.2 554.5,130.5 557.8,134.2 561.5,134.2 565.2,130.5 570.2,130.5 574.0,127.0 580.2,127.0 584.0,130.5 587.8,130.5 591.5,134.2 609.0,134.2 612.8,139.5 615.2,134.2 617.8,139.5 621.5,134.2 626.2,134.2 630.0,130.5 648.8,130.5 651.8,127.0 654.2,130.5 685.0,130.5 688.0,127.0 690.5,130.5 703.8,130.5 707.0,134.2 718.8,134.2 722.5,130.5 731.2,130.5 735.0,127.0 746.2,127.0 749.2,123.0 751.2,127.0 755.0,123.0 761.2,123.0 764.5,118.8 770.0,118.8 773.8,122.5 777.5,118.8 781.2,118.8 783.8,122.5 787.5,122.5 790.0,118.8 792.5,122.5 797.5,122.5 800.5,127.0 803.8,122.5 807.0,127.0 810.0,127.0 812.5,122.5 816.2,127.0 835.0,127.0 837.5,130.5 841.2,127.0 846.2,130.5 848.8,127.0 856.2,127.0 859.5,130.5 862.5,127.0 866.2,130.5 871.2,127.0 876.2,127.0 880.0,130.5 885.0,127.0 888.8,130.5 892.5,134.2 905.0,134.2 907.5,138.0 911.2,134.2 915.0,139.5 922.5,139.5 926.2,143.2 930.0,143.2 933.8,139.5 937.5,143.2 942.5,143.2 946.2,146.8 948.8,146.8 952.5,152.5 956.2,160.0 959.5,167.5 967.5,167.5 970.0,163.0 978.8,163.0 982.5,158.8 995.0,158.8 998.8,155.0 1000.5,158.8 1003.8,155.0 1012.5,155.0 1015.0,158.8 1019.5,161.2 1022.4,158.9 1025.1,162.8 1040.2,162.8 1044.4,158.9 1048.5,154.0 1051.2,151.2 1055.4,150.7 1059.5,147.1 1063.6,143.6 1077.4,143.6 1081.0,146.3 1084.2,143.6 1092.5,143.6 1095.8,147.1 1102.1,147.1 1104.9,143.6 1107.6,147.1 1125.5,147.1 1128.8,150.7 1134.3,150.7 1137.9,154.8 1146.1,154.8 1150.2,158.9 1153.5,158.9 1158.5,162.8 1164.0,167.8 1168.1,171.9 1178.3,171.9 1181.9,166.4 1187.4,158.9 1192.9,151.2 1198.4,147.1 1206.6,147.1 1210.8,151.2 1214.9,155.4 1217.6,158.9 1223.1,158.9 1225.9,162.8 1229.5,158.9 1232.8,158.9 1236.0,154.8 1258.9,154.8 1262.5,150.7 1272.6,150.7 1275.4,147.1 1282.2,147.1 1286.4,143.6 1293.2,143.6 1296.0,146.3 1297.9,143.6 1300.1,147.1 1318.0,147.1 1320.8,150.7 1337.2,150.7 1340.0,154.8 1375.8,154.8 1378.5,158.9 1384.1,150.7 1430.4,150.7 1433.1,147.0 1442.1,147.0 1445.6,150.7 1450.4,150.7 1453.8,155.3 1471.8,155.3 1475.2,150.7 1478.0,155.3 1489.0,155.3 1491.8,150.7 1505.6,150.7 1509.0,147.0 1511.8,147.0 1515.9,151.1 1519.4,147.0 1526.3,147.0 1530.4,143.1 1533.2,143.1 1536.0,147.0 1539.4,143.1 1546.5,143.1" fill="none" stroke="#c4283a" stroke-width="1" stroke-linejoin="round" shape-rendering="crispEdges"/>
<g font-family="Liberation Sans, Arial, sans-serif" font-size="8.7">
<g fill="#f2da80" stroke="#f2da80" stroke-width=".25" text-anchor="end">
<text x="203" y="114.2" letter-spacing="-0.7">watts</text>
<text x="203.5" y="892.1">0-</text>
<text x="203.5" y="868.3">20-</text>
<text x="203.5" y="844.5">40-</text>
<text x="203.5" y="820.6">60-</text>
<text x="203.5" y="796.8">80-</text>
<text x="203.5" y="772.9">100-</text>
<text x="203.5" y="749.1">120-</text>
<text x="203.5" y="725.2">140-</text>
<text x="203.5" y="701.4">160-</text>
<text x="203.5" y="677.5">180-</text>
<text x="203.5" y="653.7">200-</text>
<text x="203.5" y="629.8">220-</text>
<text x="203.5" y="606.0">240-</text>
<text x="203.5" y="582.1">260-</text>
<text x="203.5" y="558.3">280-</text>
<text x="203.5" y="534.4">300-</text>
<text x="203.5" y="510.6">320-</text>
<text x="203.5" y="486.7">340-</text>
<text x="203.5" y="462.9">360-</text>
<text x="203.5" y="439.0">380-</text>
<text x="203.5" y="415.2">400-</text>
<text x="203.5" y="391.3">420-</text>
<text x="203.5" y="367.5">440-</text>
<text x="203.5" y="343.6">460-</text>
<text x="203.5" y="319.8">480-</text>
<text x="203.5" y="296.0">500-</text>
<text x="203.5" y="272.1">520-</text>
<text x="203.5" y="248.3">540-</text>
<text x="203.5" y="224.4">560-</text>
<text x="203.5" y="200.6">580-</text>
<text x="203.5" y="176.7">600-</text>
<text x="203.5" y="152.9">620-</text>
<text x="203.5" y="129.0">640-</text>
</g>
<g fill="#e01420" stroke="#e01420" stroke-width=".25" text-anchor="end">
<text x="222" y="114.2" letter-spacing="-0.7">bpm</text>
<text x="222.5" y="892.4">0-</text>
<text x="222.5" y="875.9">4-</text>
<text x="222.5" y="859.5">8-</text>
<text x="222.5" y="843.1">12-</text>
<text x="222.5" y="826.7">16-</text>
<text x="222.5" y="810.3">20-</text>
<text x="222.5" y="793.8">24-</text>
<text x="222.5" y="777.4">28-</text>
<text x="222.5" y="761.0">32-</text>
<text x="222.5" y="744.6">36-</text>
<text x="222.5" y="728.2">40-</text>
<text x="222.5" y="711.7">44-</text>
<text x="222.5" y="695.3">48-</text>
<text x="222.5" y="678.9">52-</text>
<text x="222.5" y="662.5">56-</text>
<text x="222.5" y="646.1">60-</text>
<text x="222.5" y="629.7">64-</text>
<text x="222.5" y="613.2">68-</text>
<text x="222.5" y="596.8">72-</text>
<text x="222.5" y="580.4">76-</text>
<text x="222.5" y="564.0">80-</text>
<text x="222.5" y="547.6">84-</text>
<text x="222.5" y="531.1">88-</text>
<text x="222.5" y="514.7">92-</text>
<text x="222.5" y="498.3">96-</text>
<text x="222.5" y="481.9">100-</text>
<text x="222.5" y="465.5">104-</text>
<text x="222.5" y="449.1">108-</text>
<text x="222.5" y="432.6">112-</text>
<text x="222.5" y="416.2">116-</text>
<text x="222.5" y="399.8">120-</text>
<text x="222.5" y="383.4">124-</text>
<text x="222.5" y="367.0">128-</text>
<text x="222.5" y="350.5">132-</text>
<text x="222.5" y="334.1">136-</text>
<text x="222.5" y="317.7">140-</text>
<text x="222.5" y="301.3">144-</text>
<text x="222.5" y="284.9">148-</text>
<text x="222.5" y="268.5">152-</text>
<text x="222.5" y="252.0">156-</text>
<text x="222.5" y="235.6">160-</text>
<text x="222.5" y="219.2">164-</text>
<text x="222.5" y="202.8">168-</text>
<text x="222.5" y="186.4">172-</text>
<text x="222.5" y="169.9">176-</text>
<text x="222.5" y="153.5">180-</text>
<text x="222.5" y="137.1">184-</text>
<text x="222.5" y="120.7">188-</text>
</g>
<g fill="#62cc62" stroke="#62cc62" stroke-width=".25">
<text x="1548" y="114.2" letter-spacing="-0.5">rpm</text>
<text x="1549.3" y="892.9">-0</text>
<text x="1549.3" y="876.0">-4</text>
<text x="1549.3" y="859.1">-8</text>
<text x="1549.3" y="842.3">-12</text>
<text x="1549.3" y="825.4">-16</text>
<text x="1549.3" y="808.5">-20</text>
<text x="1549.3" y="791.7">-24</text>
<text x="1549.3" y="774.8">-28</text>
<text x="1549.3" y="757.9">-32</text>
<text x="1549.3" y="741.1">-36</text>
<text x="1549.3" y="724.2">-40</text>
<text x="1549.3" y="707.3">-44</text>
<text x="1549.3" y="690.5">-48</text>
<text x="1549.3" y="673.6">-52</text>
<text x="1549.3" y="656.7">-56</text>
<text x="1549.3" y="639.9">-60</text>
<text x="1549.3" y="623.0">-64</text>
<text x="1549.3" y="606.1">-68</text>
<text x="1549.3" y="589.3">-72</text>
<text x="1549.3" y="572.4">-76</text>
<text x="1549.3" y="555.5">-80</text>
<text x="1549.3" y="538.7">-84</text>
<text x="1549.3" y="521.8">-88</text>
<text x="1549.3" y="504.9">-92</text>
<text x="1549.3" y="488.1">-96</text>
<text x="1549.3" y="471.2">-100</text>
<text x="1549.3" y="454.3">-104</text>
<text x="1549.3" y="437.5">-108</text>
<text x="1549.3" y="420.6">-112</text>
<text x="1549.3" y="403.7">-116</text>
<text x="1549.3" y="386.9">-120</text>
<text x="1549.3" y="370.0">-124</text>
<text x="1549.3" y="353.2">-128</text>
<text x="1549.3" y="336.3">-132</text>
<text x="1549.3" y="319.4">-136</text>
<text x="1549.3" y="302.6">-140</text>
<text x="1549.3" y="285.7">-144</text>
<text x="1549.3" y="268.8">-148</text>
<text x="1549.3" y="252.0">-152</text>
<text x="1549.3" y="235.1">-156</text>
<text x="1549.3" y="218.2">-160</text>
<text x="1549.3" y="201.4">-164</text>
<text x="1549.3" y="184.5">-168</text>
<text x="1549.3" y="167.6">-172</text>
<text x="1549.3" y="150.8">-176</text>
<text x="1549.3" y="133.9">-180</text>
</g>
<g fill="#616de2" stroke="#616de2" stroke-width=".25">
<text x="1567" y="114.2" letter-spacing="-0.5">mph</text>
<text x="1568" y="892.2">-0</text>
<text x="1568" y="876.0">-0.6</text>
<text x="1568" y="859.7">-1.2</text>
<text x="1568" y="843.5">-1.8</text>
<text x="1568" y="827.2">-2.4</text>
<text x="1568" y="811.0">-3</text>
<text x="1568" y="794.7">-3.6</text>
<text x="1568" y="778.5">-4.2</text>
<text x="1568" y="762.2">-4.8</text>
<text x="1568" y="746.0">-5.4</text>
<text x="1568" y="729.7">-6</text>
<text x="1568" y="713.5">-6.6</text>
<text x="1568" y="697.2">-7.2</text>
<text x="1568" y="680.9">-7.8</text>
<text x="1568" y="664.7">-8.4</text>
<text x="1568" y="648.4">-9</text>
<text x="1568" y="632.2">-9.6</text>
<text x="1568" y="615.9">-10.2</text>
<text x="1568" y="599.7">-10.8</text>
<text x="1568" y="583.4">-11.4</text>
<text x="1568" y="567.2">-12</text>
<text x="1568" y="550.9">-12.6</text>
<text x="1568" y="534.7">-13.2</text>
<text x="1568" y="518.4">-13.8</text>
<text x="1568" y="502.2">-14.4</text>
<text x="1568" y="485.9">-15</text>
<text x="1568" y="469.6">-15.6</text>
<text x="1568" y="453.4">-16.2</text>
<text x="1568" y="437.1">-16.8</text>
<text x="1568" y="420.9">-17.4</text>
<text x="1568" y="404.6">-18</text>
<text x="1568" y="388.4">-18.6</text>
<text x="1568" y="372.1">-19.2</text>
<text x="1568" y="355.9">-19.8</text>
<text x="1568" y="339.6">-20.4</text>
<text x="1568" y="323.4">-21</text>
<text x="1568" y="307.1">-21.6</text>
<text x="1568" y="290.9">-22.2</text>
<text x="1568" y="274.6">-22.8</text>
<text x="1568" y="258.3">-23.4</text>
<text x="1568" y="242.1">-24</text>
<text x="1568" y="225.8">-24.6</text>
<text x="1568" y="209.6">-25.2</text>
<text x="1568" y="193.3">-25.8</text>
<text x="1568" y="177.1">-26.4</text>
<text x="1568" y="160.8">-27</text>
<text x="1568" y="144.6">-27.6</text>
<text x="1568" y="128.3">-28.2</text>
</g>
<g fill="#ffffff" stroke="#ffffff" stroke-width=".15" text-anchor="middle">
<rect x="286.5" y="890" width="1" height="2.5" fill="#fff"/>
<text x="287" y="899.7" letter-spacing="-0.3">15:00</text>
<rect x="352.5" y="890" width="1" height="2.5" fill="#fff"/>
<text x="353" y="899.7" letter-spacing="-0.3">16:00</text>
<rect x="418.5" y="890" width="1" height="2.5" fill="#fff"/>
<text x="419" y="899.7" letter-spacing="-0.3">17:00</text>
<rect x="484.5" y="890" width="1" height="2.5" fill="#fff"/>
<text x="485" y="899.7" letter-spacing="-0.3">18:00</text>
<rect x="550.5" y="890" width="1" height="2.5" fill="#fff"/>
<text x="551" y="899.7" letter-spacing="-0.3">19:00</text>
<rect x="616.5" y="890" width="1" height="2.5" fill="#fff"/>
<text x="617" y="899.7" letter-spacing="-0.3">20:00</text>
<rect x="682.5" y="890" width="1" height="2.5" fill="#fff"/>
<text x="683" y="899.7" letter-spacing="-0.3">21:00</text>
<rect x="748.5" y="890" width="1" height="2.5" fill="#fff"/>
<text x="749" y="899.7" letter-spacing="-0.3">22:00</text>
<rect x="814.5" y="890" width="1" height="2.5" fill="#fff"/>
<text x="815" y="899.7" letter-spacing="-0.3">23:00</text>
<rect x="880.5" y="890" width="1" height="2.5" fill="#fff"/>
<text x="881" y="899.7" letter-spacing="-0.3">24:00</text>
<rect x="946.5" y="890" width="1" height="2.5" fill="#fff"/>
<text x="947" y="899.7" letter-spacing="-0.3">25:00</text>
<rect x="1012.5" y="890" width="1" height="2.5" fill="#fff"/>
<text x="1013" y="899.7" letter-spacing="-0.3">26:00</text>
<rect x="1078.5" y="890" width="1" height="2.5" fill="#fff"/>
<text x="1079" y="899.7" letter-spacing="-0.3">27:00</text>
<rect x="1144.5" y="890" width="1" height="2.5" fill="#fff"/>
<text x="1145" y="899.7" letter-spacing="-0.3">28:00</text>
<rect x="1210.5" y="890" width="1" height="2.5" fill="#fff"/>
<text x="1211" y="899.7" letter-spacing="-0.3">29:00</text>
<rect x="1276.5" y="890" width="1" height="2.5" fill="#fff"/>
<text x="1277" y="899.7" letter-spacing="-0.3">30:00</text>
<rect x="1342.5" y="890" width="1" height="2.5" fill="#fff"/>
<text x="1343" y="899.7" letter-spacing="-0.3">31:00</text>
<rect x="1408.5" y="890" width="1" height="2.5" fill="#fff"/>
<text x="1409" y="899.7" letter-spacing="-0.3">32:00</text>
<rect x="1474.5" y="890" width="1" height="2.5" fill="#fff"/>
<text x="1475" y="899.7" letter-spacing="-0.3">33:00</text>
<rect x="1540.5" y="890" width="1" height="2.5" fill="#fff"/>
<text x="1541" y="899.7" letter-spacing="-0.3">34:00</text>
</g>
<text x="224" y="115.5" fill="#ffffff" font-size="8.6" letter-spacing="-0.32">Peak 20min (244 watts)</text>
</g>
</svg></div><!-- h scrollbar -->
<div class="abs" style="left:178px;top:906px;width:1412px;height:18px;background:#efefef">
  <svg class="abs" style="left:0;top:0" width="1412" height="18">
    <path d="M11 4.5 L7 8.5 L11 12.500 Z" fill="#303030"/>
    <path d="M1402 4.500 L1406 8.5 L1402 12.500 Z" fill="#303030"/>
    <defs><linearGradient id="thg" x1="0" y1="0" x2="0" y2="1"><stop offset="0" stop-color="#f2f2f2"/><stop offset=".5" stop-color="#dedede"/><stop offset="1" stop-color="#cbcbcb"/></linearGradient></defs>
    <rect x="496.500" y="1.5" width="728" height="14" rx="2.5" fill="url(#thg)" stroke="#9a9a9a"/>
    <path d="M857.500 6v5.500M860.500 6v5.500M863.500 6v5.500" stroke="#404040"/>
  </svg>
</div>
<!-- tabs -->
<div class="abs" style="left:171px;top:928px;width:1429px;height:23px;background:#f0f0f0"></div>
<div class="abs" style="left:177px;top:928px;width:38px;height:18px;border:1px solid #8a8a8a;border-top:none;border-left:1px solid #fdfdfd;border-radius:0 0 3px 3px;background:#f0f0f0"></div>
<div class="abs" style="left:215px;top:925px;width:38px;height:23px;border:1px solid #6e6e6e;border-top:none;border-left:1px solid #fdfdfd;border-radius:0 0 3px 3px;background:#f4f4f4;box-shadow:0 1px 0 #a0a0a0"></div>
<div class="abs" style="left:182px;top:931px;font-size:9.5px;line-height:14px;letter-spacing:-0.4px;color:#222">Journal</div>
<div class="abs" style="left:220px;top:931px;font-size:9.5px;line-height:14px;letter-spacing:-0.1px;color:#000">Graph</div>
<div id="statusbar"><div class="st">+35:21, 11.587 mi, 585 watts, 175 bpm, 69 rpm, 9.1 mph (6:37 min/mi), 425 lb-in</div>
  <div class="pane" style="left:1448px;width:55px"></div>
  <div class="pane" style="left:1505px;width:28px"></div>
  <div class="pane" style="left:1534px;width:32px;padding-left:2px;font-size:11.5px;letter-spacing:-0.1px">NUM</div>
  <div class="pane" style="left:1568px;width:32px"></div>
</div>

</body></html>
